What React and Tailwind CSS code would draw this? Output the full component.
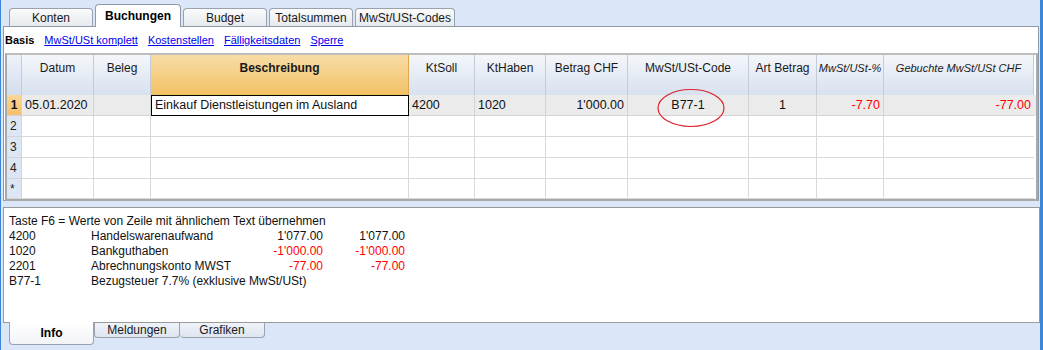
import React from 'react';

const ui = { fontFamily: '"Liberation Sans", Arial, sans-serif' };

const topTabs = [
  { label: 'Konten', w: 'w-[84px]' },
  { label: 'Buchungen', w: 'w-[86px]', active: true },
  { label: 'Budget', w: 'w-[84px]' },
  { label: 'Totalsummen', w: 'w-[84px]' },
  { label: 'MwSt/USt-Codes', w: 'w-[100px]' },
];

const links = ['MwSt/USt komplett', 'Kostenstellen', 'Fälligkeitsdaten', 'Sperre'];

const cols = 'grid grid-cols-[15px_72px_57px_258px_66px_71px_82px_121px_68px_67px_150px]';

const headers = [
  { label: 'Datum' },
  { label: 'Beleg' },
  { label: 'Beschreibung', bold: true, orange: true },
  { label: 'KtSoll' },
  { label: 'KtHaben' },
  { label: 'Betrag CHF' },
  { label: 'MwSt/USt-Code' },
  { label: 'Art Betrag' },
  { label: 'MwSt/USt-%', italic: true },
  { label: 'Gebuchte MwSt/USt CHF', italic: true },
];

const info = [
  ['4200', 'Handelswarenaufwand', "1'077.00", "1'077.00", false],
  ['1020', 'Bankguthaben', "-1'000.00", "-1'000.00", true],
  ['2201', 'Abrechnungskonto MWST', '-77.00', '-77.00', true],
];

function TopTab({ label, w, active }) {
  if (active) {
    return (
      <div className={`${w} h-[23px] -mb-px relative z-10 bg-white border border-b-0 border-[#8e9aa8] rounded-t-[4px] flex items-center justify-center text-[12px] font-bold text-black`}>
        {label}
      </div>
    );
  }
  return (
    <div className={`${w} h-[18px] bg-gradient-to-b from-[#fbfbfb] to-[#e6e9ee] border border-b-0 border-[#9aa3ad] rounded-t-[4px] flex items-center justify-center text-[12px] text-[#1a1a1a]`}>
      {label}
    </div>
  );
}

function Table() {
  const emptyRows = ['2', '3', '4', '*'];
  return (
    <div className="ml-px w-[1033px] border-2 border-[#a9a9a9] border-t-[#bdbdbd] bg-white">
      <div className={`${cols} h-[40px]`}>
        <div className="bg-gradient-to-b from-[#eef2f9] to-[#d3ddee] border-r border-[#c3cbd8]" />
        {headers.map((h) => (
          <div
            key={h.label}
            className={`pt-[4px] text-center border-r border-[#c3cbd8] whitespace-nowrap overflow-hidden ${
              h.orange ? 'bg-gradient-to-b from-[#f8dda6] to-[#f2c163] border-[#e0a850]' : 'bg-gradient-to-b from-[#f4f6fa] to-[#d8e1ef]'
            } ${h.bold ? 'font-bold' : ''} ${h.italic ? 'italic text-[11px] pt-[5px]' : 'text-[12px]'} text-[#1a1a1a]`}
          >
            {h.label}
          </div>
        ))}
      </div>
      <div className={`${cols} h-[21px] bg-[#ebebeb] text-[12.5px] text-[#111]`}>
        <div className="bg-gradient-to-b from-[#fad79a] to-[#f5bf6a] border-r border-b border-[#d4d4d4] flex items-center justify-center text-[12px] font-bold">1</div>
        <div className="border-r border-b border-[#d4d4d4] flex items-center pl-[3px]">05.01.2020</div>
        <div className="border-r border-b border-[#d4d4d4]" />
        <div className="border border-black bg-white flex items-center pl-[3px]">Einkauf Dienstleistungen im Ausland</div>
        <div className="border-r border-b border-[#d4d4d4] flex items-center pl-[3px]">4200</div>
        <div className="border-r border-b border-[#d4d4d4] flex items-center pl-[3px]">1020</div>
        <div className="border-r border-b border-[#d4d4d4] flex items-center justify-end pr-[3px]">1'000.00</div>
        <div className="relative border-r border-b border-[#d4d4d4] flex items-center justify-center">
          B77-1
          <svg className="absolute left-[28px] top-[-7px]" width="70" height="40" viewBox="0 0 70 40">
            <ellipse cx="35" cy="20" rx="33" ry="18.5" fill="none" stroke="#e0202a" strokeWidth="1.2" />
          </svg>
        </div>
        <div className="border-r border-b border-[#d4d4d4] flex items-center justify-center">1</div>
        <div className="border-r border-b border-[#d4d4d4] flex items-center justify-end pr-[3px] text-[#ff0000]">-7.70</div>
        <div className="border-b border-[#d4d4d4] flex items-center justify-end pr-[3px] text-[#ff0000]">-77.00</div>
      </div>
      {emptyRows.map((n) => (
        <div key={n} className={`${cols} h-[21px] last:h-[20px]`}>
          <div className="bg-[#dde6f4] border-r border-b border-[#d4d4d4] flex items-center pl-[3px] text-[12px] text-[#222]">{n}</div>
          {Array.from({ length: 10 }).map((_, i) => (
            <div key={i} className="border-r border-b border-[#d9d9d9] last:border-r-0" />
          ))}
        </div>
      ))}
    </div>
  );
}

export default function App() {
  return (
    <div
      className="w-[1043px] h-[350px] bg-[#dbe6f8] border-l border-r-[3px] border-[#3b86d9] flex flex-col overflow-hidden"
      style={ui}
    >
      <div className="flex items-end gap-[2px] pl-[8px] h-[26px]">
        {topTabs.map((t) => (
          <TopTab key={t.label} {...t} />
        ))}
      </div>

      <div className="ml-[2px] w-[1036px] h-[175px] bg-white border border-[#8e9aa8]">
        <div className="flex items-center h-[26px] pl-[1px] gap-[10px] text-[11px]">
          <span className="font-bold text-black">Basis</span>
          {links.map((l) => (
            <span key={l} className="text-[#0000ee] underline">{l}</span>
          ))}
        </div>
        <Table />
      </div>

      <div className="mt-[6px] ml-[2px] w-[1037px] h-[116px] bg-white border border-[#9a9a9a] pt-[6px] pl-[5px] text-[12px] leading-[15px] text-[#111]">
        <div>Taste F6 = Werte von Zeile mit ähnlichem Text übernehmen</div>
        {info.map(([code, desc, a, b, red]) => (
          <div key={code} className="grid grid-cols-[82px_160px_72px_82px]">
            <span>{code}</span>
            <span>{desc}</span>
            <span className={`text-right ${red ? 'text-[#ff0000]' : ''}`}>{a}</span>
            <span className={`text-right ${red ? 'text-[#ff0000]' : ''}`}>{b}</span>
          </div>
        ))}
        <div className="grid grid-cols-[82px_300px]">
          <span>B77-1</span>
          <span>Bezugsteuer 7.7% (exklusive MwSt/USt)</span>
        </div>
      </div>

      <div className="flex items-start pl-[8px] -mt-px">
        <div className="w-[85px] h-[23px] relative z-10 bg-gradient-to-b from-white to-[#f2f4f8] border border-t-0 border-[#9aa3ad] rounded-b-[4px] flex items-center justify-center text-[12px] font-bold text-black">
          Info
        </div>
        <div className="w-[86px] h-[15px] mt-px bg-gradient-to-b from-[#eef2f9] to-[#dfe5ef] border border-t-0 border-[#9aa3ad] rounded-b-[4px] flex items-center justify-center text-[12px] text-[#1a1a1a]">
          Meldungen
        </div>
        <div className="w-[85px] h-[15px] mt-px bg-gradient-to-b from-[#eef2f9] to-[#dfe5ef] border border-t-0 border-l-0 border-[#9aa3ad] rounded-b-[4px] flex items-center justify-center text-[12px] text-[#1a1a1a]">
          Grafiken
        </div>
      </div>
    </div>
  );
}
